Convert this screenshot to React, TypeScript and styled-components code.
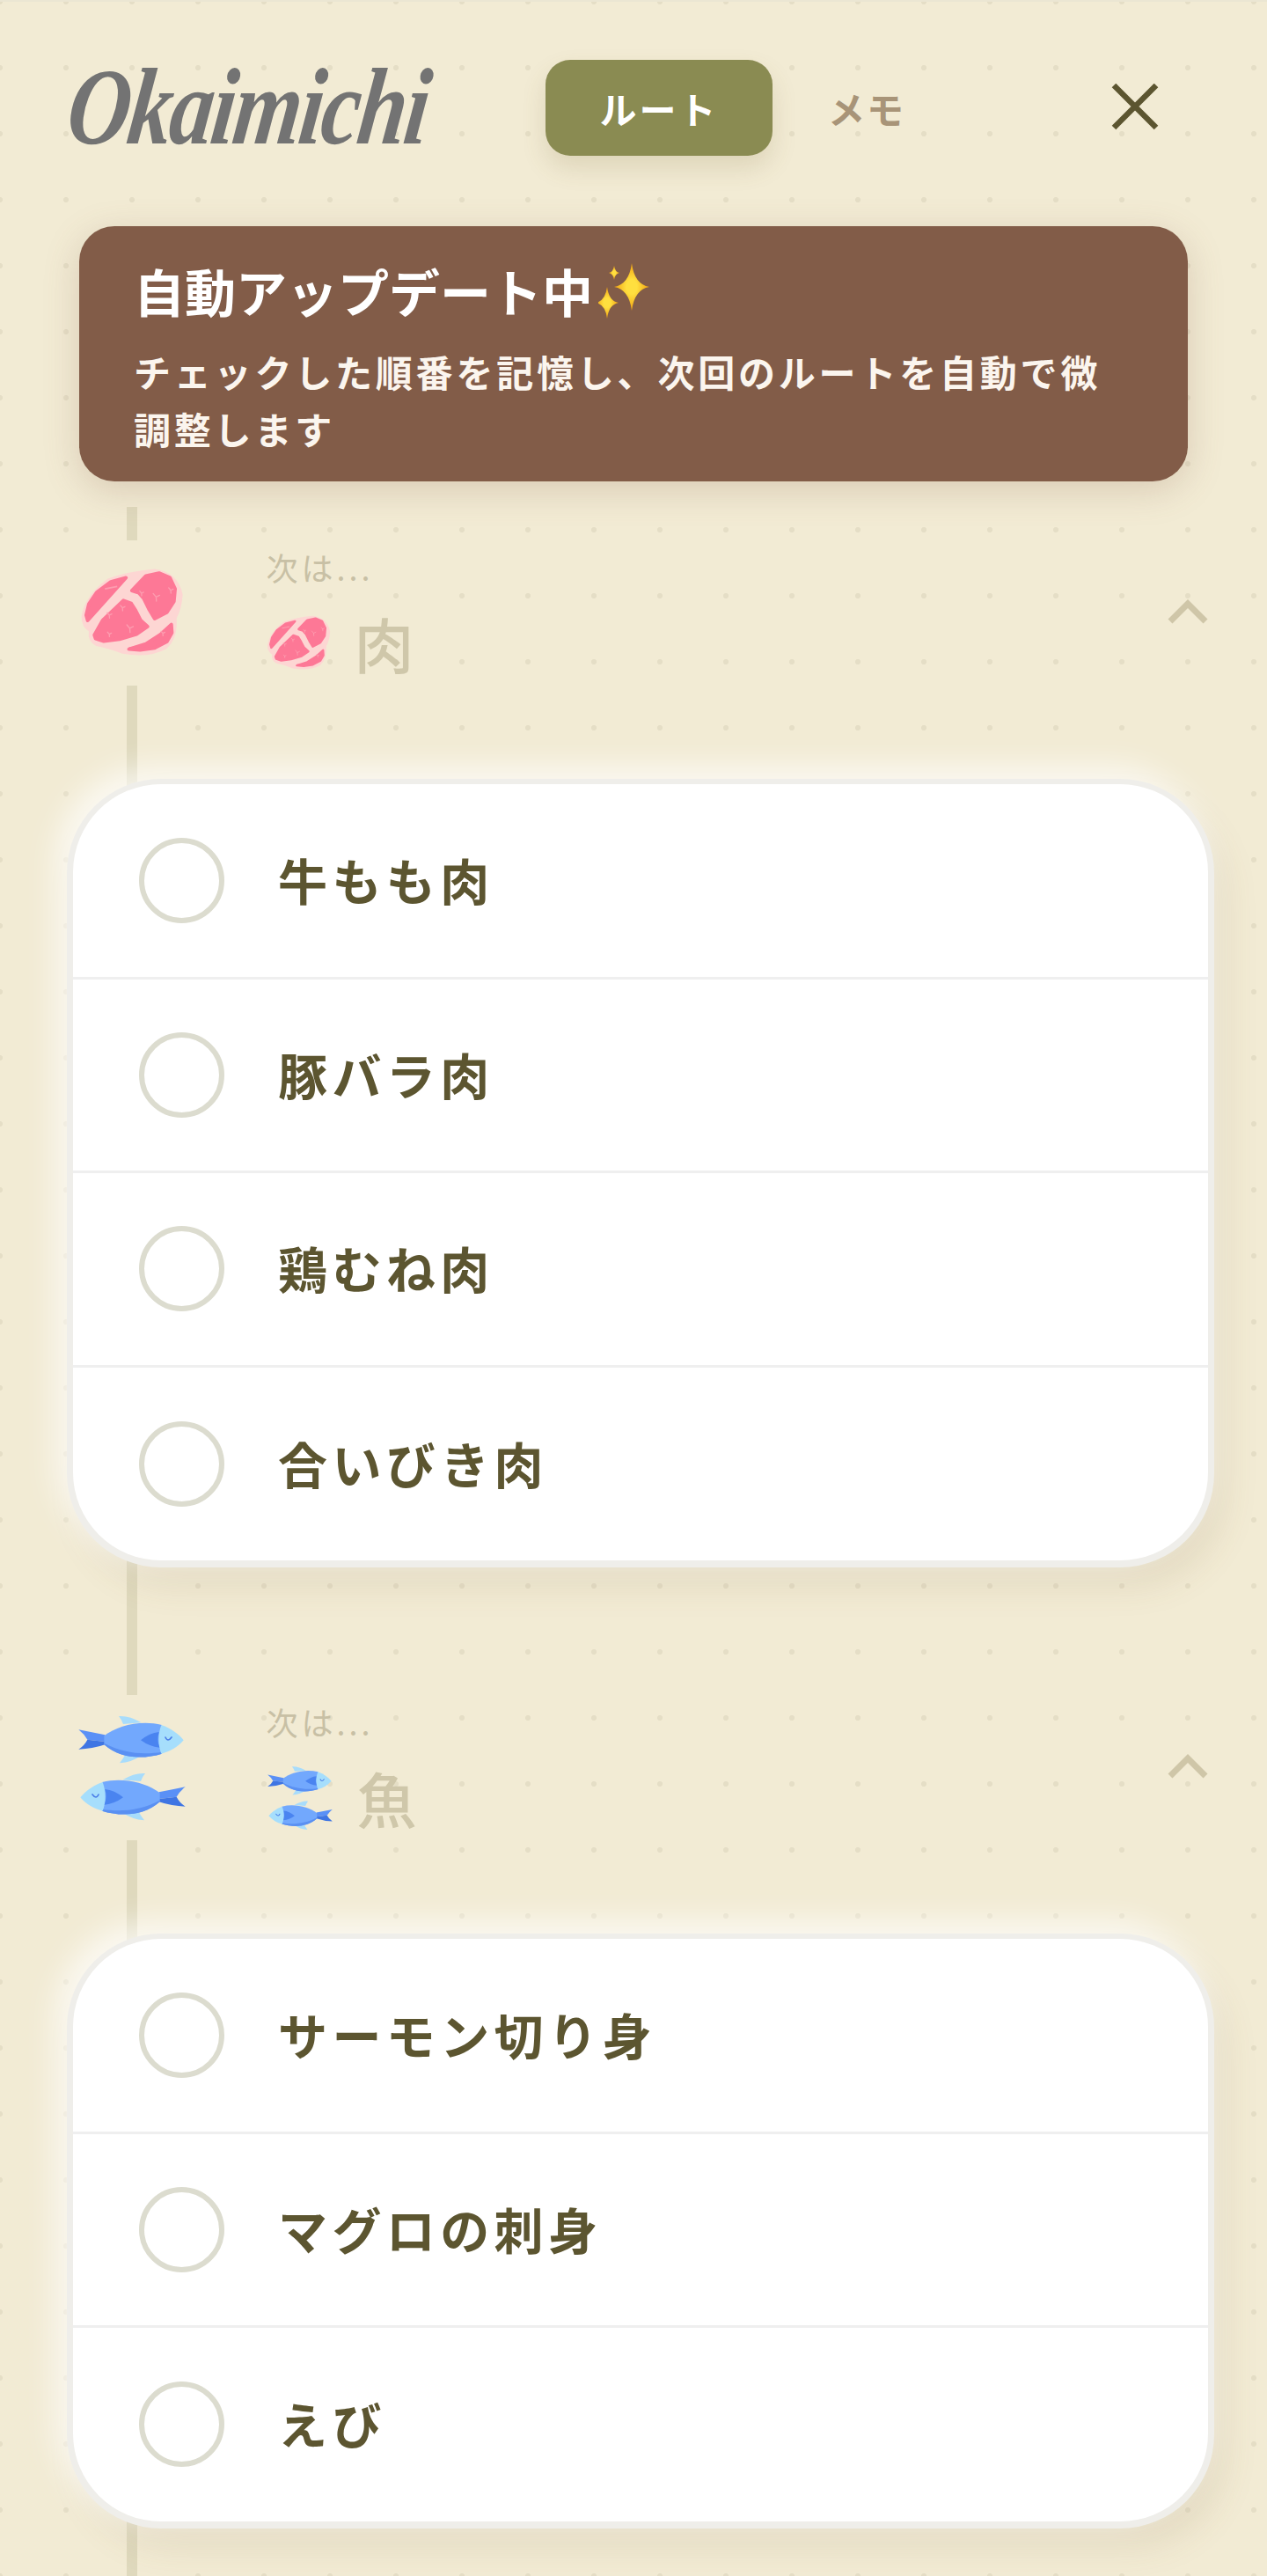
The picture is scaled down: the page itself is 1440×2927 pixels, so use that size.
import React from "react";
import styled, { createGlobalStyle } from "styled-components";

const JP = `"Noto Sans CJK JP", "Noto Sans", sans-serif`;

const Global = createGlobalStyle`
  html, body { margin: 0; padding: 0; }
  body {
    background-color: #f2ebd4;
    font-family: ${JP};
  }
`;

const Page = styled.div`
  position: relative;
  width: 1440px;
  height: 2927px;
  overflow: hidden;
  box-sizing: border-box;
  border-top: 2px solid #ebe6d3;
  background-color: #f2ebd4;
  background-image: radial-gradient(circle at 4px 4px, #e5dec6 2.7px, transparent 3.4px);
  background-size: 75px 75px;
  background-position: -4px -4px;
`;

const Rail = styled.div`
  position: absolute;
  left: 144px;
  top: 574px;
  bottom: 0;
  width: 12px;
  background: #dfd9bd;
`;

const Header = styled.header`
  display: flex;
  align-items: center;
  height: 160px;
  padding: 0 124px 0 78px;
  margin-top: 40px;
  box-sizing: border-box;
`;

const Logo = styled.div`
  width: 542px;
  font-family: "Liberation Serif", serif;
  font-style: italic;
  font-weight: 700;
  font-size: 124px;
  line-height: 1;
  letter-spacing: -3px;
  color: #737373;
  transform: skewX(-7deg) scaleX(0.8);
  transform-origin: left center;
  white-space: nowrap;
`;

const ActiveTab = styled.div`
  display: flex;
  align-items: center;
  justify-content: center;
  width: 258px;
  height: 109px;
  border-radius: 28px;
  background: #8a8b52;
  color: #fff;
  font-size: 42px;
  font-weight: 700;
  letter-spacing: 3px;
  box-shadow: 0 14px 28px rgba(120, 100, 50, 0.16);
`;

const Tab = styled.div`
  margin-left: 63px;
  color: #a89478;
  font-size: 42px;
  font-weight: 700;
  letter-spacing: 2px;
`;

const Close = styled.svg`
  width: 54px;
  height: 54px;
  margin-left: auto;
  margin-right: -1px;
  display: block;
`;

const Banner = styled.section`
  position: relative;
  margin: 55px 90px 0;
  height: 290px;
  box-sizing: border-box;
  padding: 34px 60px 0 62px;
  border-radius: 40px;
  background: #825c48;
  color: #fff;
  box-shadow: 0 10px 40px rgba(130, 92, 72, 0.22);
`;

const BannerTitle = styled.h2`
  display: flex;
  align-items: center;
  margin: 0;
  font-size: 58px;
  font-weight: 700;
  line-height: 78px;
  letter-spacing: 0;
`;

const BannerText = styled.p`
  margin: 20px 0 0;
  font-size: 42px;
  font-weight: 700;
  line-height: 65px;
  letter-spacing: 3.8px;
  color: #fbf5ee;
`;

const Sparkle = styled.svg`
  width: 60px;
  height: 66px;
  display: block;
  margin-left: 6px;
`;

const Section = styled.section<{ $gap: number }>`
  position: relative;
  margin-top: ${(p) => p.$gap}px;
  padding: 0 62px 0 83px;
`;

const GroupHead = styled.div`
  display: flex;
  align-items: stretch;
  height: 165px;
`;

const IconPatch = styled.div`
  width: 165px;
  height: 165px;
  margin-left: -15.5px;
  flex: none;
  display: flex;
  align-items: center;
  justify-content: center;
  background: #f2ebd4;
`;

const HeadText = styled.div`
  margin-left: 70px;
  padding-top: 11px;
  flex: 1;
`;

const Next = styled.div`
  font-size: 36px;
  line-height: 38px;
  color: #c8c0a5;
  letter-spacing: 4px;
`;

const NameRow = styled.div`
  display: flex;
  align-items: center;
  gap: 27px;
  margin-top: 28px;
`;

const Name = styled.div`
  font-size: 68px;
  font-weight: 500;
  line-height: 80px;
  color: #cfc7aa;
`;

const Chevron = styled.svg`
  width: 46px;
  height: 28px;
  margin: 67px 5px 0 0;
  flex: none;
  display: block;
`;

const Card = styled.ul`
  list-style: none;
  margin: 112px 0 0 0;
  padding: 0;
  width: 1290px;
  background: #fff;
  border-radius: 100px;
  box-shadow:
    0 1px 0 7px #efeeea,
    -10px -10px 34px 10px rgba(255, 255, 255, 0.7),
    14px 24px 44px rgba(120, 95, 50, 0.14);
`;

const Row = styled.li`
  display: flex;
  align-items: center;
  height: 220.5px;
  box-sizing: border-box;
  padding-left: 75px;
  border-top: 3px solid #efefef;
  &:first-child {
    height: 218.5px;
    border-top: none;
  }
  &:last-child {
    height: 222.5px;
  }
`;

const Radio = styled.span`
  flex: none;
  width: 97px;
  height: 97px;
  box-sizing: border-box;
  border: 6px solid #dcdccf;
  border-radius: 50%;
`;

const ItemName = styled.span`
  margin: 0 0 4px 61px;
  font-size: 56px;
  font-weight: 700;
  letter-spacing: 5.4px;
  color: #5c5530;
`;

const Art = styled.svg<{ $w: number; $h: number }>`
  width: ${(p) => p.$w}px;
  height: ${(p) => p.$h}px;
  display: block;
  flex: none;
`;

const MeatPiece = styled.path`
  fill: #fd7896;
  stroke: #fd7896;
  stroke-width: 12px;
  stroke-linejoin: round;
`;

const Marble = ({ x, y, s = 1 }: { x: number; y: number; s?: number }) => (
  <path
    d={`M${x} ${y}l${-10 * s} ${-12 * s}M${x} ${y}l${12 * s} ${-6 * s}M${x} ${y}l${1 * s} ${14 * s}`}
    stroke="#fd9db0"
    strokeWidth={4}
    strokeLinecap="round"
    fill="none"
  />
);

const Meat = ({ w, h }: { w: number; h: number }) => (
  <Art $w={w} $h={h} viewBox="95 78 355 312">
    <path
      d="M100 245Q110 175 190 115Q260 90 350 82Q430 92 446 170Q442 220 425 250Q430 320 390 355Q330 388 240 372Q200 355 150 345Q120 330 125 295Q100 280 100 245Z"
      fill="#fdd6d3"
    />
    <MeatPiece d="M252 112L200 126L152 162L125 202L116 240L121 258Z" />
    <MeatPiece d="M272 156L320 106L365 96L402 112L420 150L416 193L392 230L350 252L332 222L312 182L296 164Z" />
    <MeatPiece d="M243 190L270 200L285 224L302 257L326 279L288 305L230 322L176 329L148 320L144 308L172 258Z" />
    <MeatPiece d="M262 356L320 338L370 306L407 272L409 300L392 330L350 352L300 359Z" />
    <path d="M180 150L222 142" stroke="#fd9db0" strokeWidth={5} fill="none" />
    <Marble x={355} y={178} />
    <Marble x={265} y={285} />
    <Marble x={240} y={215} s={0.7} />
    <Marble x={195} y={240} s={0.7} />
    <Marble x={195} y={305} s={0.6} />
    <Marble x={405} y={155} s={0.7} />
    <Marble x={305} y={165} s={0.6} />
    <Marble x={378} y={302} s={0.6} />
  </Art>
);

const OneFish = () => (
  <g>
    <path d="M225 58Q260 55 302 80L240 85Q235 70 225 58Z" fill="#a8dcfb" />
    <path d="M228 218Q238 205 245 193L300 193Q270 215 228 218Z" fill="#a8dcfb" />
    <path d="M88 104L178 122L178 145L118 138Q108 120 88 104Z" fill="#5a90f6" />
    <path d="M88 171Q108 158 118 138L178 145L178 155Q135 170 88 171Z" fill="#3f75e3" />
    <path d="M175 125C220 90 300 70 372 88L372 186C310 205 230 205 175 155Z" fill="#72a8fd" />
    <path d="M175 150C240 185 310 190 372 180L372 186C310 205 230 205 175 155Z" fill="#5a90f2" />
    <path d="M370 88C405 100 430 120 446 140C425 165 400 178 370 186C358 155 358 120 370 88Z" fill="#a6defc" />
    <path d="M300 140Q330 115 362 112Q354 140 364 165Q330 162 300 140Z" fill="#4a84f0" />
    <path d="M384 130Q392 148 405 130" stroke="#4a7de8" strokeWidth={5} fill="none" strokeLinecap="round" />
  </g>
);

const Fish = ({ w, h }: { w: number; h: number }) => (
  <Art $w={w} $h={h} viewBox="85 52 370 366">
    <OneFish />
    <g transform="translate(540 195) scale(-1 1)">
      <OneFish />
    </g>
  </Art>
);

type Group = { next: string; name: string; kind: "meat" | "fish"; items: string[]; gap: number };

const groups: Group[] = [
  { next: "次は...", name: "肉", kind: "meat", items: ["牛もも肉", "豚バラ肉", "鶏むね肉", "合いびき肉"], gap: 67 },
  { next: "次は...", name: "魚", kind: "fish", items: ["サーモン切り身", "マグロの刺身", "えび"], gap: 153 },
];

export default function App() {
  return (
    <Page>
      <Global />
      <Rail />
      <Header>
        <Logo>Okaimichi</Logo>
        <ActiveTab>ルート</ActiveTab>
        <Tab>メモ</Tab>
        <Close viewBox="0 0 54 54">
          <path d="M3 2L51 50M51 2L3 50" stroke="#5c5530" strokeWidth={6.5} fill="none" />
        </Close>
      </Header>
      <Banner>
        <BannerTitle>
          自動アップデート中
          <Sparkle viewBox="0 0 60 66">
            <defs>
              <radialGradient id="spark">
                <stop offset="0.3" stopColor="#ffdf3f" />
                <stop offset="1" stopColor="#f0a010" />
              </radialGradient>
            </defs>
            <path d="M38 2Q41 26 58 29Q41 32 38 56Q35 32 18 29Q35 26 38 2Z" fill="url(#spark)" />
            <path d="M10 29Q12 45 23 47Q12 49 10 65Q8 49 -3 47Q8 45 10 29Z" fill="url(#spark)" />
            <path d="M18 5Q19 12 24 13Q19 14 18 21Q17 14 12 13Q17 12 18 5Z" fill="url(#spark)" />
          </Sparkle>
        </BannerTitle>
        <BannerText>チェックした順番を記憶し、次回のルートを自動で微調整します</BannerText>
      </Banner>
      {groups.map((g) => (
        <Section key={g.name} $gap={g.gap}>
          <GroupHead>
            <IconPatch>{g.kind === "meat" ? <Meat w={118} h={104} /> : <Fish w={124} h={122} />}</IconPatch>
            <HeadText>
              <Next>{g.next}</Next>
              <NameRow>
                {g.kind === "meat" ? <Meat w={73} h={66} /> : <Fish w={76} h={74} />}
                <Name>{g.name}</Name>
              </NameRow>
            </HeadText>
            <Chevron viewBox="0 0 46 28">
              <path d="M3 25L23 5L43 25" stroke="#cfc6a8" strokeWidth={7} fill="none" />
            </Chevron>
          </GroupHead>
          <Card>
            {g.items.map((it) => (
              <Row key={it}>
                <Radio />
                <ItemName>{it}</ItemName>
              </Row>
            ))}
          </Card>
        </Section>
      ))}
    </Page>
  );
}
